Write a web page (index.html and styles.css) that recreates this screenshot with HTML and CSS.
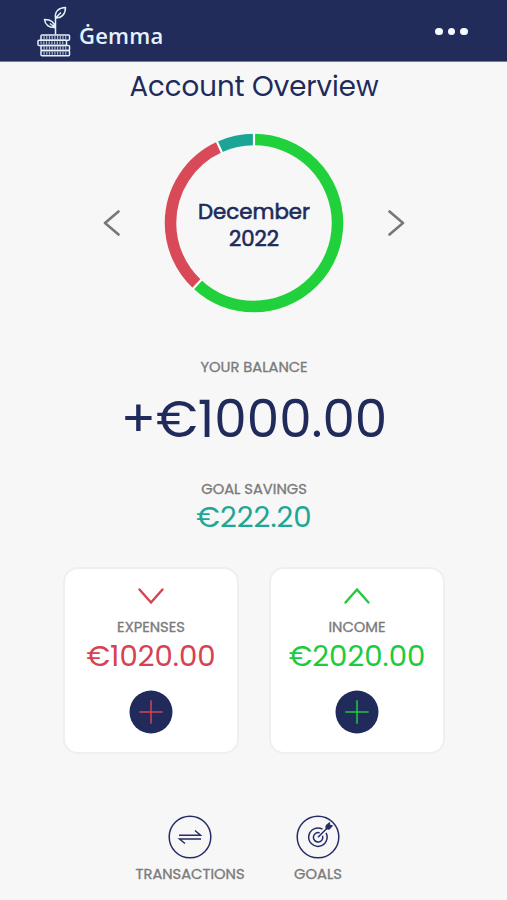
FILE: index.html
```html
<!DOCTYPE html>
<html lang="en">
<head>
<meta charset="utf-8">
<meta name="viewport" content="width=device-width, initial-scale=1">
<title>Ġemma</title>
<link rel="stylesheet" href="styles.css">
</head>
<body>
<header class="topbar">
  <div class="brand">
    <svg class="brand-icon" width="34" height="51" viewBox="0 0 34 51" fill="none" stroke="#e6f1fc" stroke-width="1.500" stroke-linejoin="round">
      <path d="M18.500 28.500V10M18 21.500C12 22 8 18.500 7.500 13.500C13 13.500 17.500 16 18 21.500M18.500 12C17.500 5.500 21.500 1.800 28.500 1.500C28.500 8 24.500 12.500 18.500 12ZM18.500 12L24 6.500M17.500 21L13 17.500"/>
      <rect x="4" y="29" width="28.500" height="5.200" rx="1"/>
      <rect x="1" y="34.200" width="28.500" height="5.200" rx="1"/>
      <rect x="4" y="39.400" width="28.500" height="5.200" rx="1"/>
      <rect x="4" y="44.600" width="28.500" height="5.200" rx="1"/>
      <path d="M6.500 31.600H30.500M3.500 36.800H27.500M6.500 42H30.500M6.500 47.200H30.500" stroke-width="3" stroke-dasharray="1.200 1.500" opacity=".7"/>
    </svg>
    <span class="brand-name">Ġemma</span>
  </div>
  <div class="more"><i></i><i></i><i></i></div>
</header>
<main class="page">
  <h1 class="title">Account Overview</h1>
  <section class="period">
    <svg class="arrow" width="18" height="26" viewBox="0 0 18 26"><path d="M15.500 1.500L2 13L15.500 24.500"/></svg>
    <div class="donut">
      <svg width="180" height="180" viewBox="0 0 180 180" fill="none">
        <g stroke-width="11.500" transform="rotate(-90 90 90)">
          <circle cx="90" cy="90" r="83.500" pathLength="100" stroke="#20d13b" stroke-dasharray="61.900 38.100"/>
          <circle cx="90" cy="90" r="83.500" pathLength="100" stroke="#d94a58" stroke-dasharray="31.300 68.700" stroke-dashoffset="-61.900"/>
          <circle cx="90" cy="90" r="83.500" pathLength="100" stroke="#1ba596" stroke-dasharray="6.800 93.200" stroke-dashoffset="-93.200"/>
        </g>
        <g stroke="#fff" stroke-width="2.200">
          <path d="M90 0V13"/>
          <path d="M90 0V13" transform="rotate(222.900 90 90)"/>
          <path d="M90 0V13" transform="rotate(335.500 90 90)"/>
        </g>
      </svg>
      <div class="month">December<br>2022</div>
    </div>
    <svg class="arrow" width="18" height="26" viewBox="0 0 18 26"><path d="M2.500 1.500L16 13L2.500 24.500"/></svg>
  </section>
  <section class="balance">
    <div class="label">YOUR BALANCE</div>
    <div class="total">+€1000.00</div>
  </section>
  <section class="savings">
    <div class="label">GOAL SAVINGS</div>
    <div class="amount goal">€222.20</div>
  </section>
  <section class="cards">
    <article class="card">
      <svg class="chevron red" width="28" height="18" viewBox="0 0 28 18"><path d="M2.500 2.500L14 15.500L25.500 2.500"/></svg>
      <div class="label">EXPENSES</div>
      <div class="amount expenses">€1020.00</div>
      <svg class="add red" width="44" height="44" viewBox="0 0 44 44"><circle cx="22" cy="22" r="21.500"/><path d="M22 10.300V33.700M10.300 22H33.700"/></svg>
    </article>
    <article class="card">
      <svg class="chevron green" width="28" height="18" viewBox="0 0 28 18"><path d="M2.500 15.500L14 2.500L25.500 15.500"/></svg>
      <div class="label">INCOME</div>
      <div class="amount income">€2020.00</div>
      <svg class="add green" width="44" height="44" viewBox="0 0 44 44"><circle cx="22" cy="22" r="21.500"/><path d="M22 10.300V33.700M10.300 22H33.700"/></svg>
    </article>
  </section>
  <nav class="links">
    <a class="link">
      <svg width="44" height="44" viewBox="0 0 44 44" fill="none" stroke="#252d66" stroke-width="1.500">
        <circle cx="22" cy="22" r="20.800"/>
        <path d="M11 20.200H32.500L27 15.500M33 24H11.500L17 28.500"/>
      </svg>
      <span class="label">TRANSACTIONS</span>
    </a>
    <a class="link">
      <svg width="44" height="44" viewBox="0 0 44 44" fill="none" stroke="#252d66" stroke-width="1.500">
        <circle cx="22" cy="22" r="20.800"/>
        <path d="M26.500 14.200A9.200 9.200 0 1 0 30 17.800M23.700 17.900A4.700 4.700 0 1 0 26.500 20.700M22 22.300L32 12.300"/>
        <path d="M30 13.800V10.500L33.500 7.500L33.800 10.300L36.500 10.700L33.400 14.200Z" fill="#252d66" stroke-width="1"/>
      </svg>
      <span class="label">GOALS</span>
    </a>
  </nav>
</main>
</body>
</html>
```
FILE: styles.css
```css
* { box-sizing: border-box; }
body {
  margin: 0;
  background: #f7f7f7;
  color: #202a5b;
  font-family: Poppins, Inter, sans-serif;
}
svg { display: block; flex: none; }
.topbar {
  display: flex;
  justify-content: space-between;
  height: 62px;
  padding: 6px 39px 0 37px;
  background: #212c5b;
  border-bottom: 1px solid #777c9f;
}
.brand { display: flex; gap: 8px; }
.brand-name {
  padding-top: 14px;
  color: #e6f1fc;
  font: 600 22px/30px "Open Sans", sans-serif;
  letter-spacing: 0.2px;
}
.more { display: flex; gap: 5px; padding-top: 21.5px; }
.more i { width: 7.6px; height: 7.6px; border-radius: 50%; background: #f5fbff; }
.page { display: flex; flex-direction: column; align-items: center; width: 508px; margin-right: -1px; }
.title { margin: 0; font-size: 27.6px; font-weight: 400; line-height: 50px; }
.period {
  display: flex;
  align-items: center;
  justify-content: space-between;
  width: 302px;
  margin-top: 21px;
}
.arrow { fill: none; stroke: #777; stroke-width: 2.6; stroke-linecap: round; stroke-linejoin: round; }
.donut { display: grid; place-items: center; }
.donut > * { grid-area: 1 / 1; }
.month {
  padding-top: 3px;
  font-size: 21.3px;
  line-height: 27px;
  text-align: center;
  -webkit-text-stroke: 0.6px currentColor;
}
.label {
  color: #7b7b7b;
  font-size: 14.7px;
  line-height: 20px;
  white-space: nowrap;
  -webkit-text-stroke: 0.35px currentColor;
}
.balance { margin-top: 44px; text-align: center; }
.total { margin-top: 12px; font-size: 51.6px; line-height: 60px; }
.savings { margin-top: 30px; text-align: center; }
.amount { font-size: 29.2px; line-height: 36px; white-space: nowrap; }
.goal { color: #20a794; }
.cards { display: flex; gap: 30px; margin-top: 32px; }
.card {
  display: flex;
  flex-direction: column;
  align-items: center;
  width: 176px;
  height: 187px;
  padding-top: 18px;
  border: 2px solid #efefef;
  border-radius: 15px;
  background: #fff;
}
.chevron { margin-bottom: 12px; fill: none; stroke: currentColor; stroke-width: 2.4; stroke-linecap: round; }
.card .amount { margin-top: 1px; }
.add { margin-top: 16px; stroke: currentColor; stroke-width: 1.5; }
.add circle { fill: #202a5b; stroke: none; }
.red, .expenses { color: #d64251; }
.green, .income { color: #21ca3d; }
.links { display: flex; gap: 84px; margin-top: 61px; }
.link { display: flex; flex-direction: column; align-items: center; gap: 5px; width: 44px; }
```
